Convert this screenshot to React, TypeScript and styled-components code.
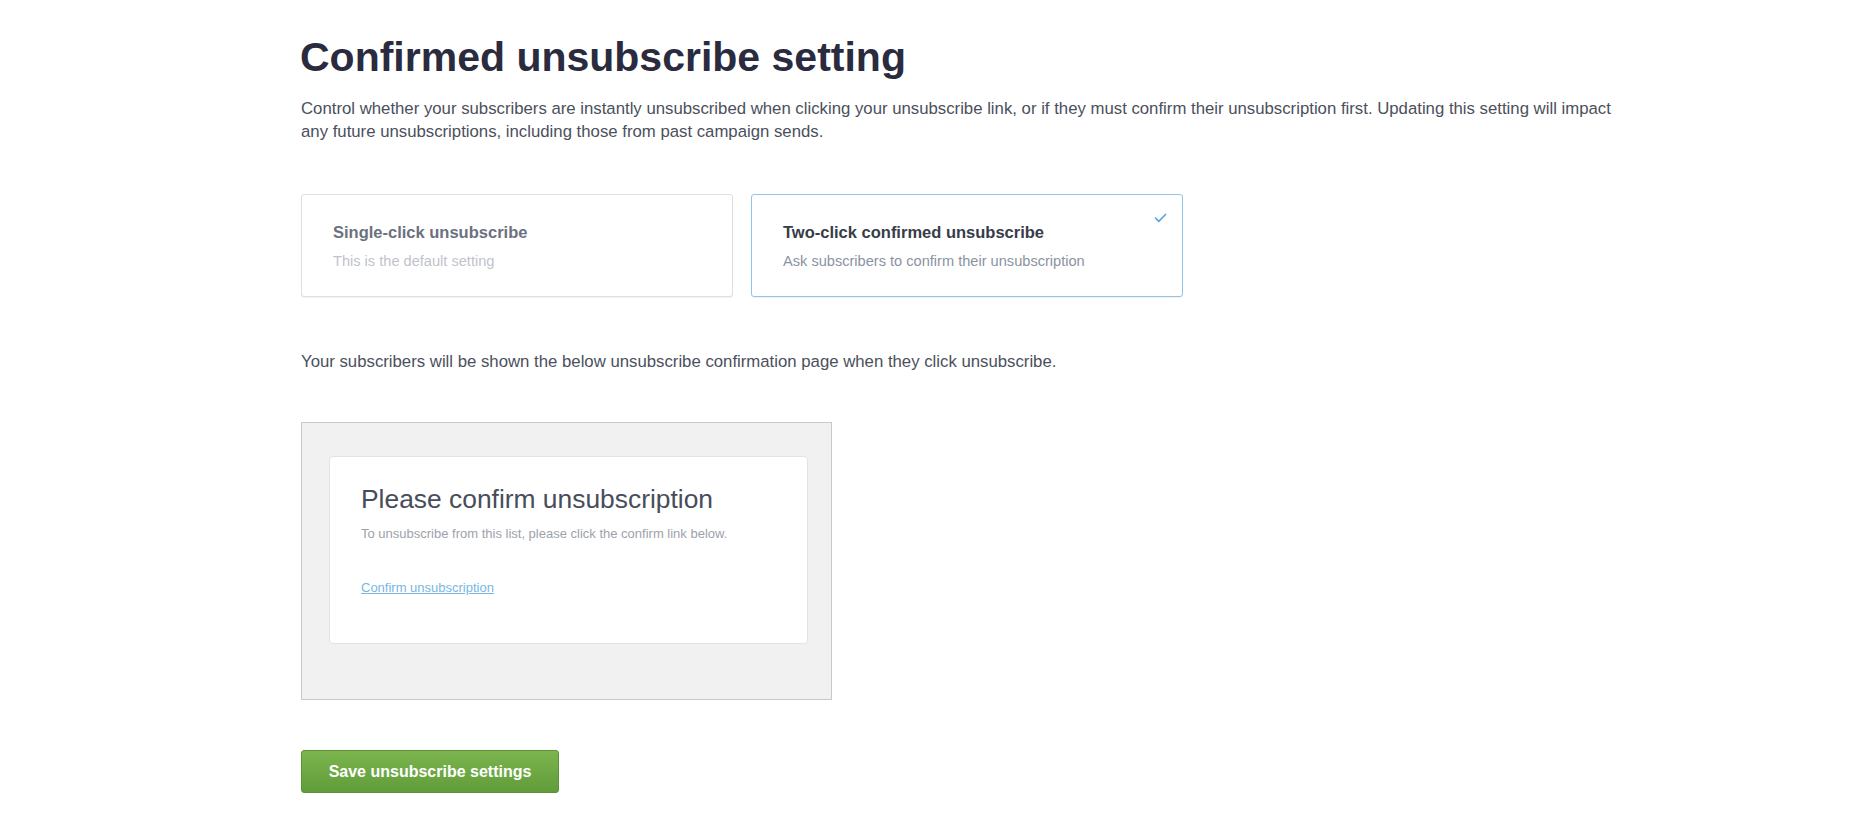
import styled, { createGlobalStyle } from 'styled-components';

const GlobalStyle = createGlobalStyle`
  body {
    margin: 0;
    background: #ffffff;
    font-family: "Liberation Sans", Arial, sans-serif;
  }
`;

const App = () => {
  return (
    <>
      <GlobalStyle />
      <Page>
        <Title>Confirmed unsubscribe setting</Title>
        <Lead>
          Control whether your subscribers are instantly unsubscribed when clicking your unsubscribe link, or if they
          must confirm their unsubscription first. Updating this setting will impact any future unsubscriptions,
          including those from past campaign sends.
        </Lead>

        <Options>
          <OptionCard $selected={false}>
            <OptionTitle $selected={false}>Single-click unsubscribe</OptionTitle>
            <OptionHint $selected={false}>This is the default setting</OptionHint>
          </OptionCard>
          <OptionCard $selected>
            <OptionTitle $selected>Two-click confirmed unsubscribe</OptionTitle>
            <OptionHint $selected>Ask subscribers to confirm their unsubscription</OptionHint>
            <CheckMark width="13" height="10" viewBox="0 0 13 10">
              <path d="M1.5 5.2 L4.8 8.3 L11.5 1.5" fill="none" stroke="#5ea7dd" strokeWidth="1.7" strokeLinecap="round" strokeLinejoin="round" />
            </CheckMark>
          </OptionCard>
        </Options>

        <Note>Your subscribers will be shown the below unsubscribe confirmation page when they click unsubscribe.</Note>

        {/* preview of the page subscribers land on */}
        <Preview>
          <PreviewCard>
            <PreviewTitle>Please confirm unsubscription</PreviewTitle>
            <PreviewText>To unsubscribe from this list, please click the confirm link below.</PreviewText>
            <PreviewLink href="#">Confirm unsubscription</PreviewLink>
          </PreviewCard>
        </Preview>

        <SaveButton type="button">Save unsubscribe settings</SaveButton>
      </Page>
    </>
  );
};

const Page = styled.main`
  display: flex;
  flex-direction: column;
  align-items: flex-start;
  padding: 33px 0 40px 300px;
`;

const Title = styled.h1`
  margin: 0;
  font-size: 41px;
  line-height: 48px;
  font-weight: 700;
  color: #2b2b40;
`;

const Lead = styled.p`
  margin: 16px 0 0 1px;
  max-width: 1322px;
  font-size: 16.75px;
  line-height: 23px;
  color: #4b505c;
`;

const Options = styled.div`
  display: flex;
  gap: 18px;
  margin-top: 51px;
  margin-left: 1px;
`;

const OptionCard = styled.button<{ $selected: boolean }>`
  position: relative;
  display: flex;
  flex-direction: column;
  align-items: flex-start;
  width: 432px;
  height: 103px;
  box-sizing: border-box;
  padding: 27px 31px 0;
  background: #ffffff;
  border: 1px solid ${(p) => (p.$selected ? '#92c5e7' : '#dcdfe4')};
  border-radius: 3px;
  box-shadow: 0 1px 1px rgba(0, 0, 0, 0.06);
  font-family: inherit;
  text-align: left;
  cursor: pointer;
`;

const OptionTitle = styled.span<{ $selected: boolean }>`
  font-size: 16.5px;
  line-height: 20px;
  font-weight: 700;
  color: ${(p) => (p.$selected ? '#373c49' : '#6c7180')};
`;

const OptionHint = styled.span<{ $selected: boolean }>`
  margin-top: 10px;
  font-size: 14.6px;
  line-height: 18px;
  color: ${(p) => (p.$selected ? '#8b93a1' : '#bfc3cb')};
`;

const CheckMark = styled.svg`
  position: absolute;
  top: 18px;
  right: 15px;
`;

const Note = styled.p`
  margin: 53px 0 0 1px;
  font-size: 16.75px;
  line-height: 23px;
  color: #4b505c;
`;

const Preview = styled.div`
  width: 531px;
  height: 278px;
  box-sizing: border-box;
  margin-top: 49px;
  margin-left: 1px;
  padding: 33px 0 0 27px;
  background: #f1f1f1;
  border: 1px solid #c9c9c9;
`;

const PreviewCard = styled.div`
  display: flex;
  flex-direction: column;
  align-items: flex-start;
  width: 479px;
  height: 188px;
  box-sizing: border-box;
  padding: 26px 31px 0;
  background: #ffffff;
  border: 1px solid #e3e3e3;
  border-radius: 4px;
`;

const PreviewTitle = styled.h2`
  margin: 0;
  font-size: 26.4px;
  line-height: 32px;
  font-weight: 400;
  color: #474d5a;
`;

const PreviewText = styled.p`
  margin: 11px 0 0;
  font-size: 13px;
  line-height: 16px;
  color: #9da2ab;
`;

const PreviewLink = styled.a`
  margin-top: 38px;
  font-size: 13px;
  line-height: 16px;
  color: #78b6e4;
  text-decoration: underline;
`;

const SaveButton = styled.button`
  margin-top: 50px;
  margin-left: 1px;
  width: 258px;
  height: 43px;
  background: linear-gradient(#7cb54f, #609c39);
  border: 1px solid #5b9236;
  border-radius: 3px;
  color: #ffffff;
  font-family: inherit;
  font-size: 16px;
  font-weight: 700;
  cursor: pointer;
`;

export default App;
